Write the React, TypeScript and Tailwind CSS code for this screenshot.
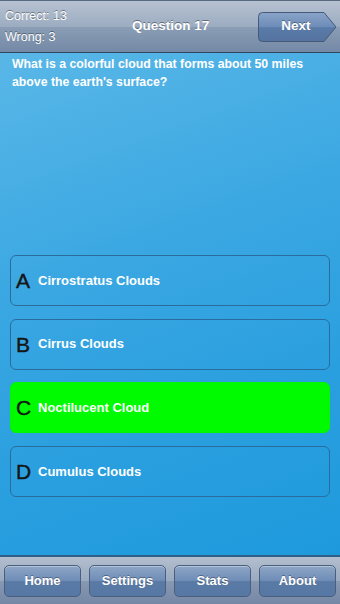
const answers = [
  { letter: "A", text: "Cirrostratus Clouds", correct: false },
  { letter: "B", text: "Cirrus Clouds", correct: false },
  { letter: "C", text: "Noctilucent Cloud", correct: true },
  { letter: "D", text: "Cumulus Clouds", correct: false },
];

const tabs = ["Home", "Settings", "Stats", "About"];

function BarButton({ label }: { label: string }) {
  return (
    <div className="flex h-[32px] w-[77px] items-center justify-center rounded-[5px] border border-[#4a5f7c] bg-[linear-gradient(#8ea6c6_0%,#6f8db7_48%,#5a7aa6_52%,#5778a4_100%)] text-[13px] font-bold text-white shadow-[inset_0_1px_0_rgba(255,255,255,0.35)] [text-shadow:0_-1px_0_rgba(0,0,0,0.35)]">
      {label}
    </div>
  );
}

export default function App() {
  return (
    <div className="flex h-[604px] w-[340px] flex-col overflow-hidden font-['Liberation_Sans',Arial,sans-serif]">
      <div className="relative flex h-[53px] shrink-0 items-center border-b border-[#33465f] border-t border-t-[#5a6a80] bg-[linear-gradient(#b7c2d1_0%,#9cacc1_50%,#8a9db5_52%,#7489a6_100%)] pl-[5px] pr-[3px]">
        <div className="flex flex-col gap-[5px] text-[12.5px] leading-[16px] text-white [text-shadow:0_-1px_0_rgba(0,0,0,0.4)]">
          <span>Correct: 13</span>
          <span>Wrong: 3</span>
        </div>
        <div className="absolute left-[132px] top-[15px] text-[13.5px] font-bold text-white [text-shadow:0_-1px_0_rgba(0,0,0,0.4)]">
          Question 17
        </div>
        <div className="relative ml-auto flex h-[30px] w-[79px] items-center">
          <svg width="79" height="30" viewBox="0 0 79 30" className="absolute left-0 top-0">
            <defs>
              <linearGradient id="nx" x1="0" y1="0" x2="0" y2="1">
                <stop offset="0" stopColor="#8aa4c8" />
                <stop offset="0.5" stopColor="#6d8cb8" />
                <stop offset="0.52" stopColor="#5a7ba8" />
                <stop offset="1" stopColor="#54739f" />
              </linearGradient>
            </defs>
            <path d="M4.5 0.5 H66 L78 15 L66 29.5 H4.5 Q0.5 29.5 0.5 25.5 V4.5 Q0.5 0.5 4.5 0.5 Z" fill="url(#nx)" stroke="#455a78" />
          </svg>
          <span className="relative w-[76px] text-center text-[13.5px] font-bold text-white [text-shadow:0_-1px_0_rgba(0,0,0,0.35)]">
            Next
          </span>
        </div>
      </div>

      <div className="flex flex-1 flex-col bg-[linear-gradient(160deg,#59b7e7_0%,#3aa7e2_40%,#2a9fdf_70%,#1e9adc_100%)]">
        <p className="px-[12px] pt-[2px] text-[12.3px] font-bold leading-[18px] text-white">
          What is a colorful cloud that forms about 50 miles above the earth's surface?
        </p>
        <div className="mt-[164px] flex flex-col gap-[12.6px] px-[10px]">
          {answers.map((a) => (
            <div
              key={a.letter}
              className={
                a.correct
                  ? "flex h-[51px] items-center rounded-[6px] border border-[#00f700] bg-[#00fa00] pl-[5px]"
                  : "flex h-[51px] items-center rounded-[6px] border-[1.5px] border-[#2a6d9c] pl-[5px]"
              }
            >
              <span className="w-[22px] text-[21px] leading-none text-[#151515] [-webkit-text-stroke:0.4px_#151515]">{a.letter}</span>
              <span className="text-[13px] font-bold text-white">{a.text}</span>
            </div>
          ))}
        </div>
      </div>

      <div className="flex h-[49px] shrink-0 items-center gap-[8px] border-t-2 border-[#2f5f86] bg-[linear-gradient(#b3bfcf_0%,#9aaac0_50%,#8798b2_52%,#7487a5_100%)] px-[4px]">
        {tabs.map((t) => (
          <BarButton key={t} label={t} />
        ))}
      </div>
    </div>
  );
}
